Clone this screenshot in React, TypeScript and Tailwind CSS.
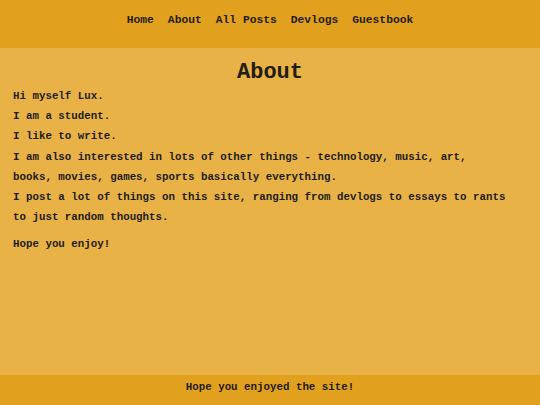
const NAV = ["Home", "About", "All Posts", "Devlogs", "Guestbook"];

const PARAGRAPHS = [
  "Hi myself Lux.",
  "I am a student.",
  "I like to write.",
  "I am also interested in lots of other things - technology, music, art, books, movies, games, sports basically everything.",
  "I post a lot of things on this site, ranging from devlogs to essays to rants to just random thoughts.",
];

export default function App() {
  return (
    <div
      className="flex h-[405px] w-[540px] flex-col overflow-hidden bg-[#e8b247] text-[#231d10]"
      style={{ fontFamily: '"Liberation Mono", "DejaVu Sans Mono", monospace' }}
    >
      <header className="h-[48px] shrink-0 bg-[#e2a01f]">
        <nav className="flex justify-center gap-[14px] pt-[13px] text-[11.3px] font-bold leading-[14px]">
          {NAV.map((item) => (
            <a key={item} href="#" className="whitespace-pre">
              {item}
            </a>
          ))}
        </nav>
      </header>

      <main className="flex-1 pl-[13px] pr-[30px] pt-[13px]">
        <h1 className="ml-[17px] mb-[1px] text-center text-[22px] font-bold leading-[24px]">About</h1>
        {PARAGRAPHS.map((p, i) => (
          <p key={i} className="text-[10.8px] font-bold leading-[20.2px]">
            {p}
          </p>
        ))}
        <p className="mt-[7px] text-[10.8px] font-bold leading-[20.2px]">Hope you enjoy!</p>
      </main>

      <footer className="h-[30px] shrink-0 bg-[#e2a01f] pt-[5px] text-center text-[10.8px] font-bold leading-[14px]">
        Hope you enjoyed the site!
      </footer>
    </div>
  );
}
